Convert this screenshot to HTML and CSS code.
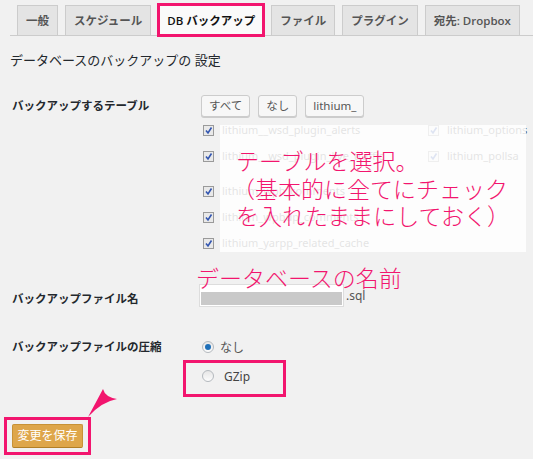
FILE: index.html
```html
<!DOCTYPE html>
<html lang="ja">

<head>
    <meta charset="UTF-8">
    <title>DB バックアップ</title>
    <link rel="stylesheet" href="styles.css">
</head>

<body>
    <div class="tabs">
        <span class="tab">一般</span>
        <span class="tab">スケジュール</span>
        <span class="tab active mark">DB バックアップ</span>
        <span class="tab">ファイル</span>
        <span class="tab">プラグイン</span>
        <span class="tab">宛先: Dropbox</span>
    </div>

    <h3 class="title">データベースのバックアップの 設定</h3>

    <div class="row">
        <div class="label">バックアップするテーブル</div>
        <div class="field tables">
            <div class="buttons">
                <span class="button">すべて</span>
                <span class="button">なし</span>
                <span class="button">lithium_</span>
            </div>
            <div class="list">
                <div class="col">
                    <div class="item"><span class="cb"></span>lithium__wsd_plugin_alerts</div>
                    <div class="item gap"><span class="cb"></span>lithium__wsd_plugin_live_traffic</div>
                    <div class="item"><span class="cb"></span>lithium_wpb_comments</div>
                    <div class="item"><span class="cb"></span>lithium_wpbdp_comments</div>
                    <div class="item"><span class="cb"></span>lithium_yarpp_related_cache</div>
                </div>
                <div class="col last">
                    <div class="item"><span class="cb"></span>lithium_options</div>
                    <div class="item gap"><span class="cb"></span>lithium_pollsa</div>
                </div>
            </div>
            <!-- annotation laid over the table list -->
            <div class="note">
                <p class="first">テーブルを選択。</p>
                <p>（基本的に全てにチェック</p>
                <p class="first">を入れたままにしておく）</p>
            </div>
        </div>
    </div>

    <div class="row">
        <div class="label name-label">バックアップファイル名</div>
        <div class="field">
            <div class="filename">
                <span class="name-note">データベースの名前</span>
                <span class="input"><span class="redact"></span></span>
                <span class="ext">.sql</span>
            </div>
        </div>
    </div>

    <div class="row">
        <div class="label zip-label">バックアップファイルの圧縮</div>
        <div class="field radios">
            <div class="radio-row"><span class="radio checked"></span>なし</div>
            <div class="radio-row mark"><span class="radio"></span><span class="gzip">GZip</span></div>
        </div>
    </div>

    <div class="submit">
        <span class="save mark">変更を保存</span>
        <svg class="pointer" width="40" height="40" viewBox="0 0 40 40">
            <path d="M1 29 L16 1 Q18 9 30 11 Q14 14 1 29 Z" fill="#f2156e" />
        </svg>
    </div>
</body>

</html>
```

FILE: styles.css
```css
* {
    padding: 0;
    margin: 0;
    box-sizing: border-box;
}

body {
    background: #f1f1f1;
    font-family: "Noto Sans", "Noto Sans CJK JP", sans-serif;
    font-size: 12px;
    color: #23282d;
    width: 533px;
    height: 459px;
    overflow: hidden;
}

/* pink highlight boxes drawn over items */
.mark {
    position: relative;
}

.mark::after {
    content: "";
    position: absolute;
    border: 3px solid #f2156e;
}

.tabs {
    margin: 5px 0 0 10px;
    padding-left: 7px;
    height: 31px;
    border-bottom: 1px solid #ccc;
    display: flex;
    gap: 7px;
}

.tab {
    height: 30px;
    padding: 0 8px;
    border: 1px solid #ccc;
    border-bottom: none;
    background: #e4e4e4;
    color: #555;
    font-family: "Open Sans", "Noto Sans CJK JP", sans-serif;
    font-size: 11.5px;
    font-weight: 600;
    line-height: 29px;
    white-space: nowrap;
}

.tab.active {
    background: #fafafa;
    color: #111;
    margin: 0 1px;
    padding: 0 7px;
}

.tab.active::after {
    left: -3px;
    right: -3px;
    top: -3px;
    bottom: -2px;
}

.title {
    margin: 14px 0 0 10px;
    font-size: 13px;
    font-weight: normal;
    line-height: 20px;
}

.row {
    display: flex;
    padding-left: 12px;
}

.label {
    width: 187px;
    font-size: 11.5px;
    font-weight: bold;
    line-height: 22px;
    flex-shrink: 0;
    margin-top: 25px;
}

.field {
    flex: 1;
    position: relative;
}

.tables {
    margin-top: 25px;
}

.buttons {
    display: flex;
    gap: 8px;
    padding-left: 2px;
}

.button {
    height: 22px;
    padding: 0 7px;
    background: #f7f7f7;
    border: 1px solid #ccc;
    border-radius: 3px;
    box-shadow: 0 1px 0 #ccc;
    color: #555;
    font-size: 11.5px;
    line-height: 20px;
}

.list {
    display: flex;
}

.col {
    width: 225px;
}

.col.last {
    width: 110px;
    overflow: hidden;
}

.item {
    height: 26px;
    line-height: 26px;
    padding-left: 4px;
    color: #555;
    font-size: 11px;
    white-space: nowrap;
    display: flex;
    align-items: center;
}

.item.gap {
    margin-bottom: 9px;
}

.cb {
    width: 11px;
    height: 11px;
    margin-right: 8px;
    border: 1px solid #9a9a9a;
    background: #e9e9e9 url("data:image/svg+xml,%3Csvg xmlns='http://www.w3.org/2000/svg' width='9' height='9'%3E%3Cpath d='M2 4.5 L4 7 L7.5 1.5' stroke='%233356b0' stroke-width='1.6' fill='none'/%3E%3C/svg%3E") center no-repeat;
    flex-shrink: 0;
}

.note {
    position: absolute;
    left: 21px;
    top: 30px;
    width: 306px;
    height: 127px;
    background: rgba(255, 255, 255, 0.84);
    padding: 22px 0 0 16px;
    color: #f2156e;
    font-family: "Noto Sans CJK JP", sans-serif;
    font-size: 23px;
    font-weight: 300;
    line-height: 27.5px;
    white-space: nowrap;
}

.note p {
    margin-left: -4px;
}

.note p.first {
    margin-left: 0;
}

.name-label {
    margin-top: 32px;
}

.filename {
    margin-top: 28px;
    display: flex;
    align-items: center;
    position: relative;
}

.name-note {
    position: absolute;
    left: -3px;
    top: -20px;
    color: #f2156e;
    font-family: "Noto Sans CJK JP", sans-serif;
    font-size: 23px;
    font-weight: 300;
    line-height: 26px;
    white-space: nowrap;
}

.input {
    width: 145px;
    height: 23px;
    border: 1px solid #ddd;
    background: #fff;
    padding: 7px 1px 1px 1px;
}

.redact {
    display: block;
    height: 13px;
    background: #c9c9c9;
}

.ext {
    margin-left: 2px;
    color: #555;
}

.zip-label {
    margin-top: 27px;
    line-height: 20px;
}

.radios {
    margin-top: 27px;
}

.radio-row {
    height: 20px;
    display: flex;
    align-items: center;
    padding-left: 3px;
    color: #555;
}

.radio-row.mark {
    margin-top: 9px;
}

.radio-row.mark::after {
    left: -16px;
    width: 97px;
    top: -6px;
    height: 31px;
}

.radio {
    width: 12px;
    height: 12px;
    margin-right: 6px;
    border: 1px solid #b4b9be;
    border-radius: 50%;
    background: linear-gradient(#e6e6e6, #fcfcfc);
    display: flex;
    align-items: center;
    justify-content: center;
}

.radio.checked::before {
    content: "";
    width: 6px;
    height: 6px;
    border-radius: 50%;
    background: #1e6fb8;
}

.gzip {
    margin-left: 4px;
    color: #444;
}

.submit {
    margin: 38px 0 0 12px;
    position: relative;
}

.save {
    display: inline-block;
    width: 71px;
    height: 24px;
    background: #dea64a;
    border: 1px solid #c89236;
    border-bottom-color: #b27f26;
    border-radius: 2px;
    color: #fff;
    text-align: center;
    line-height: 22px;
}

.save::after {
    left: -9px;
    right: -9px;
    top: -8px;
    bottom: -8px;
}

.pointer {
    position: absolute;
    left: 75px;
    top: -36px;
}
```
